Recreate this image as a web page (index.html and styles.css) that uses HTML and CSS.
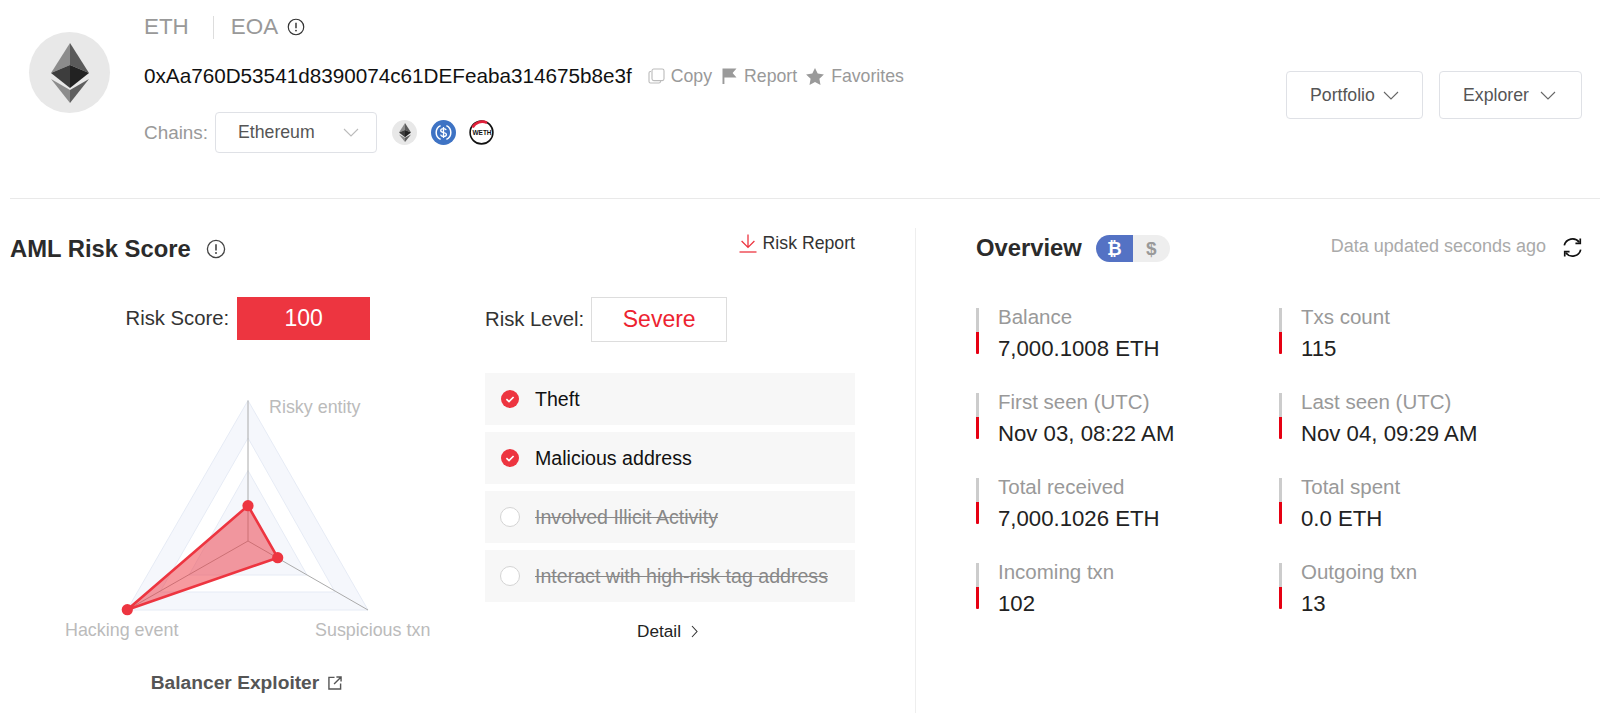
FILE: index.html
```html
<!DOCTYPE html>
<html lang="en">
<head>
    <meta charset="UTF-8" />
    <title>AML Risk Score</title>
    <link rel="stylesheet" href="styles.css">
</head>
<body>

<svg class="sprite" aria-hidden="true">
    <symbol id="ic-eth" viewBox="0 0 38 60">
        <polygon points="19,0 0,30 19,22" fill="#8c8c8c"/>
        <polygon points="19,0 38,30 19,22" fill="#5a5a5a"/>
        <polygon points="19,22 0,30 19,45" fill="#3d3d3d"/>
        <polygon points="19,22 38,30 19,45" fill="#222"/>
        <polygon points="0,36 19,60 19,47" fill="#8c8c8c"/>
        <polygon points="38,36 19,60 19,47" fill="#5f5f5f"/>
    </symbol>
    <symbol id="ic-info" viewBox="0 0 20 20">
        <circle cx="10" cy="10" r="8.6" fill="none" stroke="currentColor" stroke-width="1.3"/>
        <line x1="10" y1="5.2" x2="10" y2="11.4" stroke="currentColor" stroke-width="1.6"/>
        <circle cx="10" cy="14" r="1" fill="currentColor"/>
    </symbol>
    <symbol id="ic-chevron" viewBox="0 0 16 9">
        <polyline points="1,1 8,8 15,1" fill="none" stroke="currentColor" stroke-width="1.1"/>
    </symbol>
    <symbol id="ic-check" viewBox="0 0 18 18">
        <circle cx="9" cy="9" r="9" fill="#ed3540"/>
        <polyline points="5.4,9.2 8,11.6 12.6,7" fill="none" stroke="#fff" stroke-width="1.7"/>
    </symbol>
</svg>

<header class="top">
    <div class="avatar"><svg class="avatar-logo"><use href="#ic-eth"/></svg></div>

    <div class="info">
        <div class="title-row">
            <span>ETH</span>
            <span class="title-sep"></span>
            <span>EOA</span>
            <svg class="title-info"><use href="#ic-info"/></svg>
        </div>
        <div class="addr-row">
            <span class="addr">0xAa760D53541d8390074c61DEFeaba314675b8e3f</span>
            <span class="addr-link copy-link">
                <svg class="ic-small" viewBox="0 0 17 16">
                    <path d="M3 3.5H2.6A1.6 1.6 0 0 0 1 5.1v8.3A1.6 1.6 0 0 0 2.6 15h8.3a1.6 1.6 0 0 0 1.6-1.6V13" fill="none" stroke="#bbb" stroke-width="1.1"/>
                    <rect x="4" y="1" width="12" height="11.6" rx="1.8" fill="none" stroke="#bbb" stroke-width="1.1"/>
                </svg>
                Copy
            </span>
            <span class="addr-link report-link">
                <svg class="ic-small" viewBox="0 0 15 16">
                    <path d="M0.5 0.5H14.5L10.6 5L14.5 9.6H2.4V16H0.5Z" fill="#9a9a9a"/>
                </svg>
                Report
            </span>
            <span class="addr-link fav-link">
                <svg class="ic-star" viewBox="0 0 18 17">
                    <polygon points="9,0 11.7,5.6 17.9,6.4 13.4,10.7 14.5,16.9 9,13.9 3.5,16.9 4.6,10.7 0.1,6.4 6.3,5.6" fill="#9a9a9a"/>
                </svg>
                Favorites
            </span>
        </div>
        <div class="chain-row">
            <span class="chain-label">Chains:</span>
            <div class="select chain-select">
                <span>Ethereum</span>
                <svg class="chevron chevron-light"><use href="#ic-chevron"/></svg>
            </div>
            <div class="token token-eth"><svg class="token-eth-logo"><use href="#ic-eth"/></svg></div>
            <svg class="token token-usdc" viewBox="0 0 25 25">
                <circle cx="12.5" cy="12.5" r="12.5" fill="#3e73c4"/>
                <path d="M9.6 5.6a7.6 7.6 0 0 0 0 13.8M15.4 5.6a7.6 7.6 0 0 1 0 13.8" fill="none" stroke="#fff" stroke-width="1.5"/>
                <path d="M15.2 10.2c-.3-1.1-1.3-1.6-2.7-1.6-1.6 0-2.8.7-2.8 2 0 2.8 5.7 1.2 5.7 3.9 0 1.3-1.3 2-2.9 2-1.5 0-2.6-.6-2.9-1.8M12.5 7v11" fill="none" stroke="#fff" stroke-width="1.3"/>
            </svg>
            <svg class="token token-weth" viewBox="0 0 25 25">
                <circle cx="12.5" cy="12.5" r="11.4" fill="#fff" stroke="#111" stroke-width="1.6"/>
                <path d="M3.6 7.4A10.8 10.8 0 0 1 18 2.8" fill="none" stroke="#e0203a" stroke-width="2.6"/>
                <text class="weth-text" x="13" y="14.8">WETH</text>
            </svg>
        </div>
    </div>

    <div class="actions">
        <div class="select action-btn portfolio-btn">
            <span>Portfolio</span>
            <svg class="chevron"><use href="#ic-chevron"/></svg>
        </div>
        <div class="select action-btn explorer-btn">
            <span>Explorer</span>
            <svg class="chevron"><use href="#ic-chevron"/></svg>
        </div>
    </div>
</header>

<main class="main">
    <section class="risk">
        <div class="risk-head">
            <h2 class="heading">AML Risk Score</h2>
            <svg class="heading-info"><use href="#ic-info"/></svg>
            <a class="risk-report">
                <svg class="ic-download" viewBox="0 0 18 19">
                    <path d="M9 0.5V13M2.6 7L9 13.4L15.4 7" fill="none" stroke="#ed3540" stroke-width="1.3"/>
                    <line x1="0.5" y1="18" x2="17.5" y2="18" stroke="#ed3540" stroke-width="1.3"/>
                </svg>
                Risk Report
            </a>
        </div>

        <div class="risk-body">
            <div class="radar-col">
                <div class="score-row">
                    <span class="score-label">Risk Score:</span>
                    <span class="score-box">100</span>
                </div>

                <svg class="radar" viewBox="0 0 475 260">
                    <!-- page x minus 10, page y minus 390 -->
                    <path d="M238 10.5L358 220L117 220ZM238 48L325 202L150 202Z" fill="#f5f7fc" fill-rule="evenodd" stroke="#e6ebf5"/>
                    <path d="M238 80.5L297 185L179 185Z" fill="#f5f7fc" stroke="#e6ebf5"/>
                    <path d="M238 10.5V151M238 151L358 220M238 151L117 220" fill="none" stroke="#aaa"/>
                    <polygon points="238,115.7 267.7,167.7 117.3,219.7" fill="#ed3540" fill-opacity="0.5" stroke="#ed3540" stroke-width="2.6" stroke-linejoin="round"/>
                    <circle cx="238" cy="115.7" r="5.6" fill="#ed3540"/>
                    <circle cx="267.7" cy="167.7" r="5.6" fill="#ed3540"/>
                    <circle cx="117.3" cy="219.7" r="5.6" fill="#ed3540"/>
                    <text class="radar-label" x="259" y="23">Risky entity</text>
                    <text class="radar-label" x="55" y="246">Hacking event</text>
                    <text class="radar-label" x="305" y="246">Suspicious txn</text>
                </svg>

                <div class="entity">
                    <span>Balancer Exploiter</span>
                    <svg class="ic-external" viewBox="0 0 15 15">
                        <path d="M7 1.5H1V14H13.5V8M6.5 8.5L13.5 1.5M9 1H14V6" fill="none" stroke="#555" stroke-width="1.5"/>
                    </svg>
                </div>
            </div>

            <div class="level-col">
                <div class="level-row">
                    <span class="score-label">Risk Level:</span>
                    <span class="level-box">Severe</span>
                </div>
                <ul class="tags">
                    <li class="tag"><svg class="tag-check"><use href="#ic-check"/></svg>Theft</li>
                    <li class="tag"><svg class="tag-check"><use href="#ic-check"/></svg>Malicious address</li>
                    <li class="tag off"><span class="tag-radio"></span><s>Involved Illicit Activity</s></li>
                    <li class="tag off"><span class="tag-radio"></span><s>Interact with high-risk tag address</s></li>
                </ul>
                <div class="detail">
                    Detail
                    <svg class="ic-detail" viewBox="0 0 7 13"><polyline points="1,1 6,6.5 1,12" fill="none" stroke="#333" stroke-width="1.1"/></svg>
                </div>
            </div>
        </div>
    </section>

    <section class="overview">
        <div class="overview-head">
            <h2 class="heading">Overview</h2>
            <div class="unit-toggle">
                <span class="unit unit-on">₿</span>
                <span class="unit">$</span>
            </div>
            <span class="updated">Data updated seconds ago</span>
            <svg class="ic-refresh" viewBox="0 0 20 20">
                <path d="M2.2 8A8 8 0 0 1 16.4 5M17.8 12A8 8 0 0 1 3.6 15" fill="none" stroke="#111" stroke-width="1.6"/>
                <path d="M17.4 1.4V6H12.8M2.6 18.6V14H7.2" fill="none" stroke="#111" stroke-width="1.6"/>
            </svg>
        </div>

        <div class="stats">
            <div class="stat"><span class="stat-bar"></span><div><div class="stat-label">Balance</div><div class="stat-value">7,000.1008 ETH</div></div></div>
            <div class="stat"><span class="stat-bar"></span><div><div class="stat-label">Txs count</div><div class="stat-value">115</div></div></div>
            <div class="stat"><span class="stat-bar"></span><div><div class="stat-label">First seen (UTC)</div><div class="stat-value">Nov 03, 08:22 AM</div></div></div>
            <div class="stat"><span class="stat-bar"></span><div><div class="stat-label">Last seen (UTC)</div><div class="stat-value">Nov 04, 09:29 AM</div></div></div>
            <div class="stat"><span class="stat-bar"></span><div><div class="stat-label">Total received</div><div class="stat-value">7,000.1026 ETH</div></div></div>
            <div class="stat"><span class="stat-bar"></span><div><div class="stat-label">Total spent</div><div class="stat-value">0.0 ETH</div></div></div>
            <div class="stat"><span class="stat-bar"></span><div><div class="stat-label">Incoming txn</div><div class="stat-value">102</div></div></div>
            <div class="stat"><span class="stat-bar"></span><div><div class="stat-label">Outgoing txn</div><div class="stat-value">13</div></div></div>
        </div>
    </section>
</main>

</body>
</html>
```

FILE: styles.css
```css
* {
    box-sizing: border-box;
}
body {
    margin: 0;
    height: 713px;
    overflow: hidden;
    background: #fff;
    color: #222;
    font-family: "Liberation Sans", Arial, sans-serif;
}
.sprite {
    display: none;
}

/* top block */
.top {
    display: flex;
    align-items: flex-start;
    height: 199px;
    margin-left: 10px;
    padding: 0 18px 0 19px;
    border-bottom: 1px solid #e9e9e9;
}
.avatar {
    display: flex;
    align-items: center;
    justify-content: center;
    width: 81px;
    height: 81px;
    margin-top: 32px;
    border-radius: 50%;
    background: #e8e8e8;
}
.avatar-logo {
    width: 38px;
    height: 60px;
}
.info {
    margin-left: 34px;
    padding-top: 13px;
}
.title-row {
    display: flex;
    align-items: center;
    height: 28px;
    font-size: 22.4px;
    color: #999;
}
.title-sep {
    width: 1px;
    height: 23px;
    margin: 0 17px 0 24px;
    background: #ddd;
}
.title-info {
    width: 18px;
    height: 18px;
    margin-left: 9px;
    color: #333;
}
.addr-row {
    display: flex;
    align-items: center;
    height: 28px;
    margin-top: 21px;
    font-size: 17.7px;
    color: #999;
}
.addr {
    margin-right: 16px;
    font-size: 20.7px;
    color: #111;
}
.addr-link {
    display: flex;
    align-items: center;
    gap: 8px;
    margin-right: 10px;
}
.copy-link {
    gap: 6px;
}
.report-link {
    gap: 7px;
    margin-right: 9px;
}
.fav-link {
    gap: 7px;
}
.ic-small {
    width: 15px;
    height: 16px;
}
.copy-link .ic-small {
    width: 17px;
}
.ic-star {
    width: 18px;
    height: 17px;
}
.chain-row {
    display: flex;
    align-items: center;
    margin-top: 22px;
}
.chain-label {
    width: 71px;
    font-size: 18.9px;
    color: #999;
}
.select {
    display: flex;
    align-items: center;
    justify-content: space-between;
    border: 1px solid #dfe1e6;
    border-radius: 4px;
    background: #fff;
    font-size: 17.7px;
    color: #555;
}
.chain-select {
    width: 162px;
    height: 41px;
    padding: 0 17px 0 22px;
}
.chevron {
    width: 16px;
    height: 9px;
    color: #666;
}
.chevron-light {
    color: #bbb;
}
.token {
    width: 25px;
    height: 25px;
    margin-left: 14px;
}
.token-eth {
    display: flex;
    align-items: center;
    justify-content: center;
    margin-left: 15px;
    border-radius: 50%;
    background: #e8e8e8;
}
.token-eth-logo {
    width: 12px;
    height: 19px;
}
.token-weth {
    margin-left: 13px;
}
.weth-text {
    font-size: 6.5px;
    font-weight: bold;
    text-anchor: middle;
    fill: #111;
}
.actions {
    display: flex;
    gap: 16px;
    margin-top: 71px;
    margin-left: auto;
}
.action-btn {
    height: 48px;
    padding: 0 23px;
}
.portfolio-btn {
    width: 137px;
}
.explorer-btn {
    width: 143px;
    padding-right: 25px;
}

/* main block */
.main {
    display: flex;
    height: 485px;
    margin-top: 29px;
}
.risk {
    width: 906px;
    margin-left: 10px;
    padding-right: 60px;
    border-right: 1px solid #eee;
}
.risk-head {
    display: flex;
    align-items: center;
    height: 42px;
}
.heading {
    margin: 0;
    font-size: 23.8px;
    font-weight: bold;
    color: #2b2b2b;
}
.heading-info {
    width: 20px;
    height: 20px;
    margin-left: 15px;
    color: #444;
}
.risk-report {
    display: flex;
    align-items: center;
    gap: 6px;
    margin-left: auto;
    margin-bottom: 12px;
    font-size: 17.7px;
    color: #333;
}
.ic-download {
    width: 18px;
    height: 19px;
}
.risk-body {
    display: flex;
    margin-top: 27px;
}
.radar-col {
    width: 475px;
}
.score-row {
    display: flex;
    align-items: center;
    padding-left: 115.5px;
    gap: 8px;
}
.score-label {
    font-size: 20.3px;
    color: #333;
}
.score-box {
    width: 133px;
    height: 43px;
    background: #ed3540;
    color: #fff;
    font-size: 23px;
    line-height: 43px;
    text-align: center;
}
.radar {
    display: block;
    width: 475px;
    height: 260px;
    margin-top: 50px;
}
.radar-label {
    font-size: 17.9px;
    fill: #bbb;
}
.entity {
    display: flex;
    align-items: center;
    justify-content: center;
    gap: 9px;
    height: 22px;
    margin-top: 22px;
    padding-right: 2px;
    font-size: 19.2px;
    font-weight: bold;
    color: #555;
}
.ic-external {
    width: 14px;
    height: 14px;
}
.level-col {
    width: 370px;
}
.level-row {
    display: flex;
    align-items: center;
    gap: 7px;
}
.level-box {
    width: 136px;
    height: 45px;
    border: 1px solid #ddd;
    color: #ed2330;
    font-size: 23px;
    line-height: 43px;
    text-align: center;
}
.tags {
    display: flex;
    flex-direction: column;
    gap: 7px;
    margin: 31px 0 0;
    padding: 0;
    list-style: none;
}
.tag {
    display: flex;
    align-items: center;
    height: 52px;
    padding-left: 16px;
    background: #f7f7f7;
    font-size: 19.6px;
    color: #111;
}
.tag-check {
    width: 18px;
    height: 18px;
    margin-right: 16px;
}
.tag.off {
    padding-left: 15px;
    color: #888;
}
.tag-radio {
    width: 20px;
    height: 20px;
    margin-right: 15px;
    border: 1px solid #d4d4d4;
    border-radius: 50%;
    background: #fff;
}
.detail {
    display: flex;
    align-items: center;
    justify-content: center;
    gap: 10px;
    height: 22px;
    margin-top: 18px;
    padding-right: 5px;
    font-size: 17.2px;
    color: #222;
}
.ic-detail {
    width: 7px;
    height: 13px;
}

/* overview */
.overview {
    flex: 1;
    padding: 0 17px 0 60px;
}
.overview-head {
    display: flex;
    align-items: center;
    height: 40px;
}
.unit-toggle {
    display: flex;
    width: 74px;
    height: 27px;
    margin-left: 14px;
    overflow: hidden;
    border-radius: 14px;
    background: #eee;
}
.unit {
    flex: 1;
    font-size: 19px;
    font-weight: bold;
    line-height: 27px;
    text-align: center;
    color: #999;
}
.unit-on {
    background: #5472c4;
    color: #fff;
    font-family: "DejaVu Sans", sans-serif;
    font-size: 18px;
}
.updated {
    margin-left: auto;
    margin-bottom: 4px;
    font-size: 18px;
    color: #aaa;
}
.ic-refresh {
    width: 21px;
    height: 21px;
    margin-left: 16px;
    margin-bottom: 2px;
}
.stats {
    display: grid;
    grid-template-columns: 303px 303px;
    grid-auto-rows: 46px;
    row-gap: 39px;
    margin-top: 40px;
}
.stat {
    display: flex;
    gap: 19px;
}
.stat-bar {
    width: 3px;
    height: 46px;
    background: linear-gradient(#ccc 52%, #e60012 52%);
    border-radius: 0 0 1px 1px;
}
.stat-label {
    height: 32px;
    margin-top: -1px;
    font-size: 20.5px;
    line-height: 20px;
    color: #999;
}
.stat-value {
    font-size: 22.2px;
    line-height: 20px;
    color: #222;
}
```
